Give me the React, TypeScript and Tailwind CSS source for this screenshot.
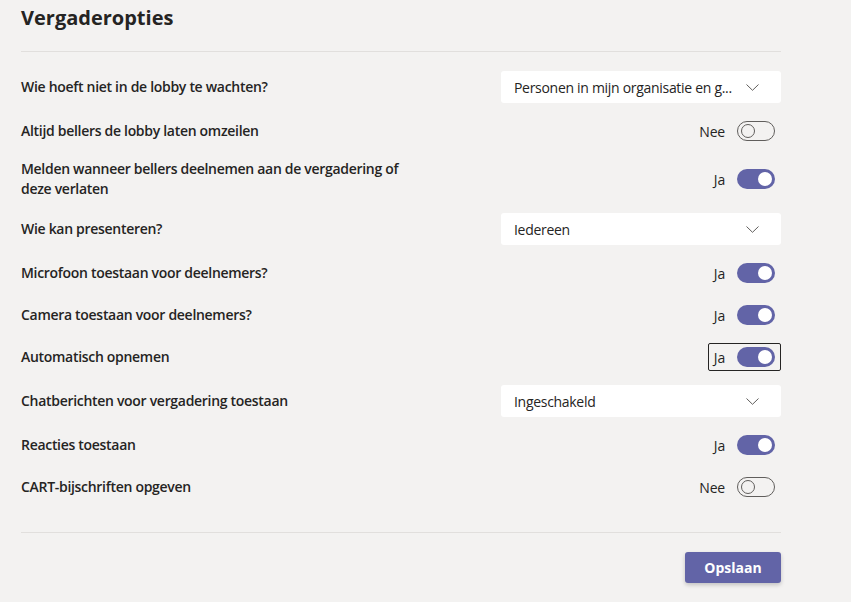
const font = { fontFamily: '"Segoe UI", "Open Sans", "Noto Sans", sans-serif' };

type Option =
  | { kind: 'select'; label: string; value: string }
  | { kind: 'toggle'; label: string; on: boolean; focused?: boolean };

const options: Option[] = [
  { kind: 'select', label: 'Wie hoeft niet in de lobby te wachten?', value: 'Personen in mijn organisatie en g...' },
  { kind: 'toggle', label: 'Altijd bellers de lobby laten omzeilen', on: false },
  { kind: 'toggle', label: 'Melden wanneer bellers deelnemen aan de vergadering of deze verlaten', on: true },
  { kind: 'select', label: 'Wie kan presenteren?', value: 'Iedereen' },
  { kind: 'toggle', label: 'Microfoon toestaan voor deelnemers?', on: true },
  { kind: 'toggle', label: 'Camera toestaan voor deelnemers?', on: true },
  { kind: 'toggle', label: 'Automatisch opnemen', on: true, focused: true },
  { kind: 'select', label: 'Chatberichten voor vergadering toestaan', value: 'Ingeschakeld' },
  { kind: 'toggle', label: 'Reacties toestaan', on: true },
  { kind: 'toggle', label: 'CART-bijschriften opgeven', on: false },
];

function Chevron() {
  return (
    <svg width="13" height="7" viewBox="0 0 13 7" fill="none">
      <path d="M0.5 0.5 L6.5 6.3 L12.5 0.5" stroke="#605e5c" strokeWidth="1" />
    </svg>
  );
}

function Select({ value }: { value: string }) {
  return (
    <div className="w-[280px] h-[32px] bg-white rounded-[3px] flex items-center justify-between pl-[13px] pr-[22px]">
      <span className="text-[14px] tracking-[-0.3px] text-[#252423]">{value}</span>
      <Chevron />
    </div>
  );
}

function Toggle({ on, focused }: { on: boolean; focused?: boolean }) {
  return (
    <div
      className={`h-[28px] flex items-center gap-[12px] pl-[5px] pr-[5px] rounded-[2px] border ${
        focused ? 'border-[#252423]' : 'border-transparent'
      }`}
    >
      <span className="text-[14px] tracking-[-0.2px] text-[#252423]">{on ? 'Ja' : 'Nee'}</span>
      {on ? (
        <div className="w-[38px] h-[20px] rounded-full bg-[#6264a7] flex items-center justify-end pr-[3px]">
          <div className="w-[14px] h-[14px] rounded-full bg-white" />
        </div>
      ) : (
        <div className="w-[38px] h-[20px] rounded-full border border-[#605e5c] flex items-center pl-[3px]">
          <div className="w-[14px] h-[14px] rounded-full border border-[#605e5c]" />
        </div>
      )}
    </div>
  );
}

export default function App() {
  return (
    <div className="min-h-[602px] bg-[#f3f2f1] text-[#252423]" style={font}>
      <div className="w-[760px] ml-[21px]">
        {/* Header */}
        <h1 className="pt-[4px] h-[51px] text-[20px] leading-[28px] font-bold">Vergaderopties</h1>
        <div className="border-t border-[#e1dfdd]" />

        {/* Options */}
        <div className="flex flex-col gap-[14px] pt-[19px]">
          {options.map((opt) => (
            <div key={opt.label} className="flex items-center justify-between">
              <div className="w-[410px] text-[14px] leading-[20px] tracking-[-0.3px] font-semibold">
                {opt.label}
              </div>
              {opt.kind === 'select' ? (
                <Select value={opt.value} />
              ) : (
                <Toggle on={opt.on} focused={opt.focused} />
              )}
            </div>
          ))}
        </div>

        {/* Footer */}
        <div className="border-t border-[#e1dfdd] mt-[31px]" />
        <div className="flex justify-end pt-[19px]">
          <button className="w-[96px] h-[31px] rounded-[3px] bg-[#6264a7] text-white text-[14px] font-bold shadow-[0_2px_4px_rgba(0,0,0,0.2)]">
            Opslaan
          </button>
        </div>
      </div>
    </div>
  );
}
